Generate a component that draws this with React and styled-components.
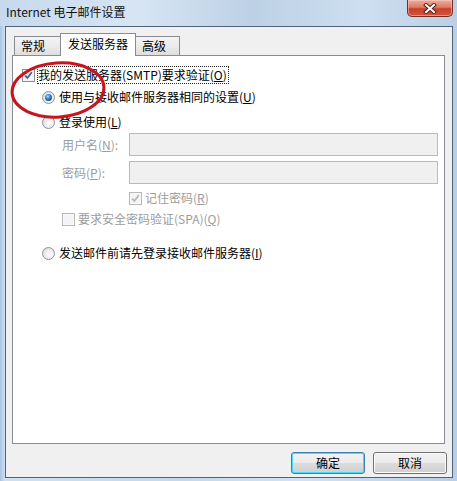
import React from "react";
import styled, { createGlobalStyle, css } from "styled-components";

const GlobalStyle = createGlobalStyle`
  html, body {
    margin: 0;
    padding: 0;
  }
  body {
    width: 457px;
    height: 481px;
    overflow: hidden;
    font-family: "Noto Sans CJK SC", "Liberation Sans", sans-serif;
    font-size: 12px;
  }
`;

const Frame = styled.div`
  position: relative;
  width: 457px;
  height: 481px;
  box-sizing: border-box;
  padding: 0 4px 3px 5px;
  display: flex;
  flex-direction: column;
  background: linear-gradient(90deg, #a9c5e3 0px, #cfe0f1 5px, #c4d8ec 40%, #d3e2f1 65%, #b9cfe6 100%);
`;

const TitleBar = styled.div`
  height: 26px;
  display: flex;
  justify-content: space-between;
  align-items: flex-start;
  background: linear-gradient(90deg, #c6d9ed 0%, #d7e5f3 30%, #bdd1e6 55%, #cddff0 80%, #bacfe5 100%);
  margin: 0 -4px 0 -5px;
  padding: 0 4px 0 5px;
`;

const Title = styled.div`
  padding: 4px 0 0 1px;
  line-height: 16px;
  font-size: 12px;
  color: #111;
`;

const CloseButton = styled.div`
  width: 46px;
  height: 17px;
  margin-right: 0;
  box-sizing: border-box;
  border: 1px solid #7b2a1d;
  border-top: none;
  border-radius: 0 0 5px 5px;
  background: linear-gradient(180deg, #eab0a2 0%, #dc7a64 45%, #c8402a 55%, #d2563c 100%);
  box-shadow: inset 0 0 0 1px rgba(255, 210, 200, 0.5);
  display: flex;
  align-items: center;
  justify-content: center;
`;

const Body = styled.div`
  flex: 1;
  border: 1px solid #4f6379;
  background: #f0f0f0;
  display: flex;
  flex-direction: column;
`;

const TabStrip = styled.div`
  height: 28px;
  box-sizing: border-box;
  padding-left: 8px;
  display: flex;
  align-items: flex-end;
`;

const Tab = styled.div`
  box-sizing: border-box;
  width: ${(p) => p.$w}px;
  border: 1px solid #898c95;
  border-bottom: none;
  line-height: 16px;
  color: #000;
  ${(p) =>
    p.$active
      ? css`
          height: 23px;
          margin-bottom: -1px;
          margin-left: -1px;
          padding: 2px 0 0 7px;
          background: #fff;
          position: relative;
          z-index: 1;
        `
      : css`
          height: 19px;
          padding: 1px 0 0 6px;
          background: linear-gradient(180deg, #f3f3f3 0%, #ebebeb 50%, #dedede 100%);
        `}
  ${(p) => p.$after && css`margin-left: -1px;`}
`;

const Panel = styled.div`
  height: 389px;
  box-sizing: border-box;
  margin: 0 7px 0 6px;
  border: 1px solid #898c95;
  background: #fff;
  padding: 0 6px 0 9px;
  display: flex;
  flex-direction: column;
`;

const Row = styled.div`
  display: flex;
  align-items: center;
  height: ${(p) => p.$h || 18}px;
  margin-top: ${(p) => p.$top}px;
  padding-left: ${(p) => p.$indent || 0}px;
  gap: ${(p) => (p.$gap === undefined ? 4 : p.$gap)}px;
`;

const Label = styled.span`
  line-height: 16px;
  white-space: nowrap;
  color: ${(p) => (p.$disabled ? "#9c9c9c" : "#000")};
`;

const FocusLabel = styled(Label)`
  border: 1px dotted #222;
  padding-right: 1px;
`;

const FieldLabel = styled(Label)`
  width: 67px;
  flex: none;
`;

const TextBox = styled.div`
  flex: 1;
  height: 23px;
  box-sizing: border-box;
  border: 1px solid #b3bcc6;
  background: #f0f0f0;
`;

const Box = styled.span`
  flex: none;
  width: 13px;
  height: 13px;
  box-sizing: border-box;
  border: 1px solid ${(p) => (p.$disabled ? "#b8b8b8" : "#8e8f8f")};
  background: ${(p) =>
    p.$disabled
      ? "#f4f4f4"
      : "linear-gradient(135deg, #dcdcdc 0%, #f4f4f4 60%, #ffffff 100%)"};
  box-shadow: inset 0 0 0 1px ${(p) => (p.$disabled ? "#f8f8f8" : "#f2f2f2")};
  display: flex;
  align-items: center;
  justify-content: center;
`;

const Radio = styled.span`
  flex: none;
  width: 13px;
  height: 13px;
  box-sizing: border-box;
  border-radius: 50%;
  border: 1px solid #8f9398;
  background: radial-gradient(circle at 60% 60%, #ffffff 0%, #e9e9e9 55%, #cfcfcf 100%);
  display: flex;
  align-items: center;
  justify-content: center;
  &::after {
    content: "";
    display: ${(p) => (p.$checked ? "block" : "none")};
    width: 7px;
    height: 7px;
    border-radius: 50%;
    background: radial-gradient(circle at 40% 35%, #b9e2fb 0%, #3d8ad0 35%, #154e86 75%, #0e3966 100%);
  }
`;

const Footer = styled.div`
  display: flex;
  justify-content: flex-end;
  gap: 8px;
  padding: 8px 5px 0 0;
`;

const Button = styled.div`
  width: 74px;
  height: 22px;
  box-sizing: border-box;
  border: 1px solid ${(p) => (p.$default ? "#3c7fb1" : "#707070")};
  border-radius: 3px;
  background: linear-gradient(180deg, #f2f2f2 0%, #ebebeb 49%, #dddddd 50%, #cfcfcf 100%);
  box-shadow: inset 0 0 0 1px ${(p) => (p.$default ? "#48dbfb" : "#fcfcfc")};
  display: flex;
  align-items: center;
  justify-content: center;
  line-height: 16px;
  color: #000;
`;

const Annotation = styled.svg`
  position: absolute;
  left: 0;
  top: 0;
  pointer-events: none;
`;

function Check({ disabled }) {
  return (
    <Box $disabled={disabled}>
      <svg width="9" height="9" viewBox="0 0 9 9">
        <path
          d="M1.2 4.6 L3.4 7 L7.8 1.2"
          fill="none"
          stroke={disabled ? "#b5b5b5" : "#3f5b9a"}
          strokeWidth="1.7"
        />
      </svg>
    </Box>
  );
}

const Key = ({ k }) => (
  <>
    (<u>{k}</u>)
  </>
);

export default function App() {
  return (
    <>
      <GlobalStyle />
      <Frame>
        <TitleBar>
          <Title>Internet 电子邮件设置</Title>
          <CloseButton>
            <svg width="14" height="11" viewBox="0 0 14 11">
              <path d="M3 2 L11 9 M11 2 L3 9" stroke="#5a1d14" strokeWidth="4" strokeLinecap="square" />
              <path d="M3 2 L11 9 M11 2 L3 9" stroke="#ffffff" strokeWidth="2" strokeLinecap="square" />
            </svg>
          </CloseButton>
        </TitleBar>
        <Body>
          <TabStrip>
            <Tab $w={47}>常规</Tab>
            <Tab $w={76} $active>发送服务器</Tab>
            <Tab $w={45} $after>高级</Tab>
          </TabStrip>
          <Panel>
            <Row $top={10} $gap={2}>
              <Check />
              <FocusLabel>
                我的发送服务器(SMTP)要求验证<Key k="O" />
              </FocusLabel>
            </Row>
            <Row $top={4} $indent={20}>
              <Radio $checked />
              <Label>
                使用与接收邮件服务器相同的设置<Key k="U" />
              </Label>
            </Row>
            <Row $top={7} $indent={20}>
              <Radio />
              <Label>
                登录使用<Key k="L" />
              </Label>
            </Row>
            <Row $top={2} $h={23} $indent={40} $gap={0}>
              <FieldLabel $disabled>
                用户名<Key k="N" />:
              </FieldLabel>
              <TextBox />
            </Row>
            <Row $top={5} $h={23} $indent={40} $gap={0}>
              <FieldLabel $disabled>
                密码<Key k="P" />:
              </FieldLabel>
              <TextBox />
            </Row>
            <Row $top={5} $indent={107} $gap={3}>
              <Check disabled />
              <Label $disabled>
                记住密码<Key k="R" />
              </Label>
            </Row>
            <Row $top={3} $indent={40} $gap={3}>
              <Box $disabled />
              <Label $disabled>
                要求安全密码验证(SPA)<Key k="Q" />
              </Label>
            </Row>
            <Row $top={16} $indent={20}>
              <Radio />
              <Label>
                发送邮件前请先登录接收邮件服务器<Key k="I" />
              </Label>
            </Row>
          </Panel>
          <Footer>
            <Button $default>确定</Button>
            <Button>取消</Button>
          </Footer>
        </Body>
        <Annotation width="457" height="481">
          <ellipse
            cx="58"
            cy="90"
            rx="46"
            ry="27"
            transform="rotate(-4 58 90)"
            fill="none"
            stroke="#c8141e"
            strokeWidth="3"
          />
        </Annotation>
      </Frame>
    </>
  );
}
